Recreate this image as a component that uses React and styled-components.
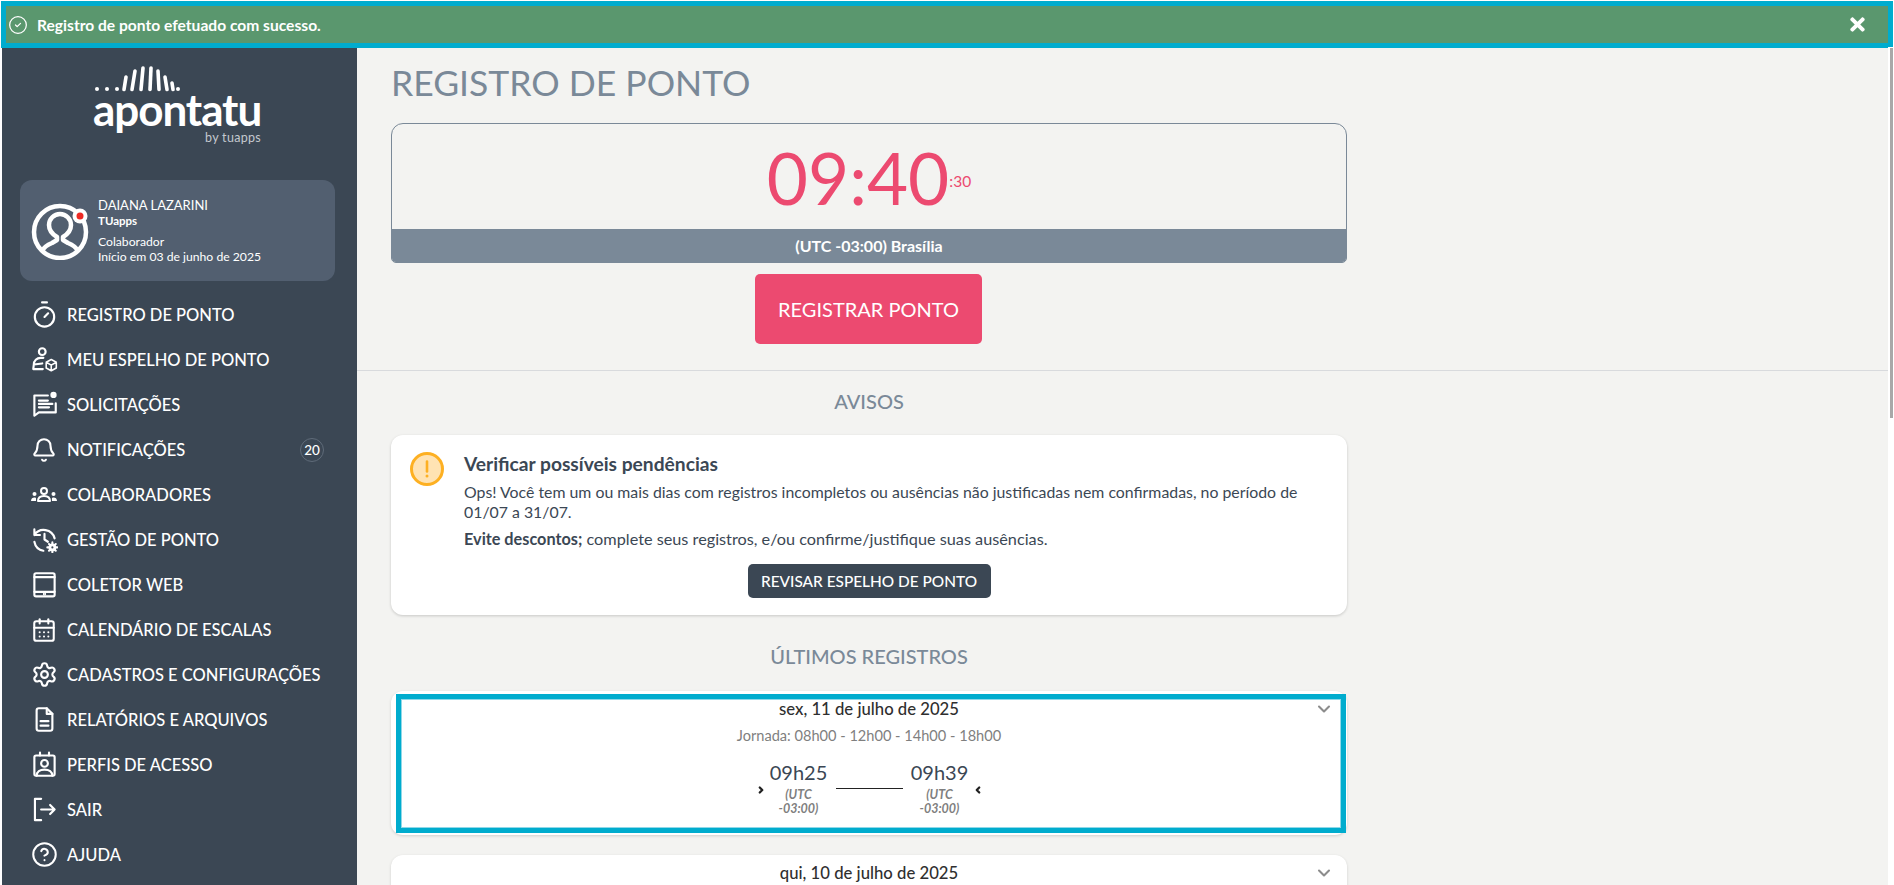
import React from "react";
import styled, { createGlobalStyle } from "styled-components";
import {
  Bell,
  CalendarDays,
  ChevronDown,
  ChevronLeft,
  ChevronRight,
  CircleCheck,
  CircleHelp,
  Settings,
  Timer,
} from "lucide-react";
import { FaTimes } from "react-icons/fa";

const GlobalStyle = createGlobalStyle`
  html, body {
    margin: 0;
    height: 100%;
    overflow: hidden;
    background: #ffffff;
    font-family: "Lato", "Noto Sans", sans-serif;
  }
  * { box-sizing: border-box; }
`;

const Page = styled.div`
  width: 1894px;
  height: 885px;
  display: flex;
  flex-direction: column;
  overflow: hidden;
`;

const Banner = styled.div`
  height: 47px;
  margin: 1px 1px 0;
  flex: none;
  display: flex;
  align-items: center;
  background: #5a976e;
  border: 5px solid #00acce;
  color: #ffffff;
  padding: 0 20px 0 2px;
`;

const BannerText = styled.span`
  margin-left: 9px;
  font-size: 15.6px;
  font-weight: 700;
  flex: 1;
`;

const Body = styled.div`
  flex: 1;
  min-height: 0;
  display: flex;
  padding-left: 2px;
`;

const Sidebar = styled.aside`
  width: 355px;
  flex: none;
  background: #3b4754;
  color: #ffffff;
  display: flex;
  flex-direction: column;
`;

const LogoBlock = styled.div`
  width: 168px;
  height: 132px;
  margin-left: 91px;
  padding-top: 18px;
  display: flex;
  flex-direction: column;
`;

const LogoWord = styled.div`
  font-size: 44px;
  font-weight: 700;
  line-height: 32px;
  letter-spacing: -1.07px;
  height: 38px;
  margin-top: 1px;
`;

const LogoBy = styled.div`
  font-size: 12.5px;
  line-height: 14px;
  letter-spacing: 0.3px;
  color: #c4c9cf;
  text-align: right;
`;

const UserCard = styled.div`
  width: 315px;
  height: 101px;
  margin-left: 18px;
  background: #525f70;
  border-radius: 12px;
  display: flex;
  align-items: center;
  padding-left: 11px;
  gap: 9px;
  flex: none;
`;

const UserInfo = styled.div`
  display: flex;
  flex-direction: column;
`;

const UserName = styled.span`
  font-size: 13px;
  line-height: 16px;
`;

const UserLine = styled.span`
  font-size: ${(p) => (p.$strong ? 11.5 : 12.2)}px;
  line-height: 15px;
  font-weight: ${(p) => (p.$strong ? 700 : 400)};
  margin-top: ${(p) => p.$gap || 0}px;
`;

const Nav = styled.nav`
  margin-top: 11px;
  display: flex;
  flex-direction: column;
`;

const NavItem = styled.a`
  height: 45px;
  flex: none;
  display: flex;
  align-items: center;
  padding: 0 28px 0 30px;
  font-size: 16.5px;
  font-weight: 500;
  white-space: nowrap;
`;

const NavIcon = styled.span`
  width: 24px;
  height: 24px;
  margin-right: 11px;
  display: flex;
  align-items: center;
  justify-content: center;

  svg {
    flex: none;
  }
`;

const NavBadge = styled.span`
  margin-left: auto;
  margin-right: 5px;
  width: 24px;
  height: 24px;
  border: 1px solid #5f6b79;
  border-radius: 50%;
  font-size: 13.5px;
  display: flex;
  align-items: center;
  justify-content: center;
`;

const Main = styled.main`
  flex: 1;
  min-width: 0;
  background: #f3f3f1;
  overflow: hidden;
`;

const TopSection = styled.section`
  padding: 14px 0 26px 34px;
  border-bottom: 1px solid #d8dadd;
`;

const Column = styled.div`
  width: 956px;
  display: flex;
  flex-direction: column;
  align-items: center;
`;

const Title = styled.h1`
  align-self: flex-start;
  margin: 0 0 19px;
  font-size: 35.5px;
  line-height: 42px;
  font-weight: 400;
  color: #7a8998;
`;

const ClockBox = styled.div`
  width: 100%;
  height: 140px;
  border: 1px solid #7a8998;
  border-radius: 12px 12px 5px 5px;
  display: flex;
  flex-direction: column;
  overflow: hidden;
`;

const ClockFace = styled.div`
  flex: 1;
  display: flex;
  align-items: center;
  justify-content: center;
  padding-top: 3px;
  color: #ec4a70;
`;

const ClockTime = styled.span`
  font-size: 71px;
  line-height: 80px;
  font-weight: 400;
`;

const ClockSeconds = styled.span`
  font-size: 15.5px;
  align-self: flex-start;
  margin-top: 45px;
`;

const ClockZone = styled.div`
  height: 33px;
  background: #7a8998;
  color: #ffffff;
  font-size: 16px;
  font-weight: 700;
  display: flex;
  align-items: center;
  justify-content: center;
`;

const RegisterButton = styled.button`
  margin: 11px 1px 0 0;
  width: 227px;
  height: 70px;
  border: 0;
  border-radius: 5px;
  background: #ec4a70;
  color: #ffffff;
  font-family: inherit;
  font-size: 20px;
`;

const BottomSection = styled.section`
  padding: 18px 0 0 34px;
`;

const Heading = styled.h2`
  margin: ${(p) => p.$top || 0}px 0 ${(p) => p.$bottom || 0}px;
  font-size: 20px;
  line-height: 24px;
  font-weight: 500;
  color: #7a8998;
`;

const NoticeCard = styled.div`
  width: 100%;
  height: 180px;
  background: #ffffff;
  border-radius: 12px;
  box-shadow: 0 1px 3px rgba(0, 0, 0, 0.18);
  display: flex;
  padding: 17px 20px 0 19px;
  gap: 20px;
  color: #3b4754;
`;

const NoticeBody = styled.div`
  flex: 1;
  display: flex;
  flex-direction: column;
`;

const NoticeTitle = styled.div`
  font-size: 19.2px;
  line-height: 24px;
  font-weight: 700;
`;

const NoticeText = styled.p`
  margin: ${(p) => p.$top || 0}px 0 0;
  font-size: ${(p) => p.$size}px;
  line-height: 20px;
`;

const ReviewButton = styled.button`
  align-self: center;
  margin: 15px 0 0 -53px;
  width: 243px;
  height: 34px;
  border: 0;
  border-radius: 5px;
  background: #3b4754;
  color: #ffffff;
  font-family: inherit;
  font-size: 15.4px;
  font-weight: 500;
`;

const RecordCard = styled.div`
  position: relative;
  width: 100%;
  height: ${(p) => p.$height}px;
  margin-bottom: 20px;
  padding-top: 7px;
  background: #ffffff;
  border-radius: 12px;
  box-shadow: 0 1px 3px rgba(0, 0, 0, 0.15);
  display: flex;
  flex-direction: column;
  align-items: center;
  flex: none;
`;

const FocusRing = styled.div`
  position: absolute;
  inset: 3px 1px 2px 5px;
  border: 5px solid #00acce;
  box-shadow: inset 0 0 0 1px #8fd8e8;
  pointer-events: none;
`;

const RecordChevron = styled.span`
  position: absolute;
  top: 8px;
  right: 13px;
  color: #8c8c8c;
  display: flex;
`;

const RecordDate = styled.div`
  font-size: 16.7px;
  line-height: 22px;
  font-weight: 500;
  color: #2f2f2f;
`;

const RecordShift = styled.div`
  margin-top: 6px;
  font-size: 14.6px;
  line-height: 20px;
  color: #7f7f7f;
`;

const Punches = styled.div`
  margin-top: 15px;
  display: flex;
  align-items: flex-start;
`;

const PunchArrow = styled.span`
  margin-top: 22px;
  width: 10px;
  display: flex;
  justify-content: center;
  color: #222222;
`;

const Punch = styled.div`
  width: 66px;
  display: flex;
  flex-direction: column;
  align-items: center;
`;

const PunchTime = styled.span`
  font-size: 20px;
  line-height: 22px;
  color: #3b4754;
`;

const PunchZone = styled.span`
  font-size: 12.5px;
  line-height: 14px;
  font-style: italic;
  font-weight: 700;
  color: #7f7f7f;
  text-align: center;
  margin-top: 5px;
  width: 44px;
`;

const PunchLine = styled.span`
  width: 67px;
  height: 1px;
  margin: 27px 4px 0;
  background: #222222;
`;

const Scrollbar = styled.div`
  width: 6px;
  flex: none;
  background: #ffffff;
  margin-top: -1px;
`;

const ScrollThumb = styled.div`
  width: 3px;
  height: 370px;
  margin: 1px 0 0 2px;
  background: #a8a8a8;
`;

const Line = ({ children, size = 27 }) => (
  <svg width={size} height={size} viewBox="0 0 24 24" fill="none" stroke="currentColor" strokeWidth="1.9" strokeLinecap="round" strokeLinejoin="round">
    {children}
  </svg>
);

const LogoBars = () => (
  <svg width="168" height="26" viewBox="0 0 168 26" fill="none" stroke="#ffffff" strokeLinecap="round">
    <g fill="#ffffff" stroke="none">
      <circle cx="4" cy="23" r="2" />
      <circle cx="14" cy="23" r="2" />
      <circle cx="24" cy="23" r="2" />
      <circle cx="85" cy="23" r="2" />
    </g>
    <g strokeWidth="3.6">
      <path d="M31 23.5 33 11" />
      <path d="M39 23.5 42 5" />
      <path d="M48 23.5 50 2" />
      <path d="M57 23.5 58 2" />
      <path d="M66 23.5 65 5" />
      <path d="M74 23.5 72 11" />
      <path d="M80 23.5 79 17" />
    </g>
  </svg>
);

const Avatar = () => (
  <svg width="58" height="58" viewBox="0 0 58 58" fill="none" stroke="#ffffff" strokeWidth="4.5">
    <circle cx="29" cy="30" r="26" />
    <path d="M11 49c2-4 5-6 10-8l5-3v-3c-5-3-8-7-8-12 0-6 5-11 11-11s11 5 11 11c0 5-3 9-8 12v3l5 3c5 2 8 4 10 8" strokeLinejoin="round" />
    <circle cx="49" cy="14" r="7.5" fill="#ffffff" stroke="none" />
    <circle cx="49" cy="14" r="3.5" fill="#ee2a24" stroke="none" />
  </svg>
);

const MirrorIcon = () => (
  <Line>
    <circle cx="10" cy="5" r="3" />
    <path d="M11 10.500H8.500A6 6 0 0 0 2.500 16.500M2 20.500h8.500M2.500 16.500 2 20.500M2.500 16.500l7.500-1" />
    <path d="m18 12 4.500 2.500v5L18 22l-4.500-2.500v-5zM13.500 14.500 18 17l4.500-2.500M18 17v5" strokeWidth="1.400" />
  </Line>
);

const RequestsIcon = () => (
  <Line>
    <path d="M15 4H3v18l4-3h15v-8" />
    <path d="M7 8.500h8M7 11.500h12M7 14.500h9" />
    <circle cx="20" cy="3.500" r="2.800" fill="currentColor" stroke="none" />
  </Line>
);

const TeamIcon = () => (
  <svg width="28" height="24" viewBox="0 0 28 24" fill="#ffffff">
    <circle cx="14" cy="8" r="3" fill="none" stroke="#ffffff" strokeWidth="2" />
    <path d="M8 18c0-3.500 2.500-5 6-5s6 1.500 6 5z" fill="none" stroke="#ffffff" strokeWidth="2" strokeLinejoin="round" />
    <circle cx="4.500" cy="11" r="2" />
    <circle cx="23.500" cy="11" r="2" />
    <path d="M1 18c0-2.500 1.500-3.500 3.500-3.500S6 15.500 6 18zM27 18c0-2.500-1.500-3.500-3.500-3.500S22 15.500 22 18z" />
  </svg>
);

const HistoryGearIcon = () => (
  <Line>
    <path d="M3 8a10 10 0 0 1 18 3M3 3v5h5M12 7v5l3 2M3 14a10 10 0 0 0 8 8" />
    <circle cx="19" cy="19" r="2.200" strokeWidth="2.500" />
    <path d="M19 14.500v1.500M19 22v1.500M14.500 19H16M22 19h1.500M16 16l1 1M21 21l1 1M22 16l-1 1M17 21l-1 1" strokeWidth="1.800" />
  </Line>
);

const TabletIcon = () => (
  <Line>
    <rect x="3" y="2" width="18" height="20.500" rx="1.500" />
    <path d="M3 5.500h18M3 18.500h18" />
    <circle cx="12" cy="20.400" r="0.500" fill="currentColor" />
  </Line>
);

const ReportIcon = () => (
  <Line>
    <path d="M14 2H7a2 2 0 0 0-2 2v16a2 2 0 0 0 2 2h10a2 2 0 0 0 2-2V7z" />
    <path d="M14 2v5h5M8.500 13.500h7M8.500 17.500h7" />
  </Line>
);

const ProfileIcon = () => (
  <Line>
    <rect x="3" y="4" width="18" height="18" rx="1.500" />
    <path d="M8 1.500V4M16 1.500V4" />
    <circle cx="12" cy="11" r="3" />
    <path d="M5 22c0-3.500 3-5.500 7-5.500s7 2 7 5.500" />
  </Line>
);

const ExitIcon = () => (
  <Line>
    <path d="M9 2.500H3.500v19H9M9 12h12M17 8l4 4-4 4" />
  </Line>
);

const WarningIcon = () => (
  <svg width="34" height="34" viewBox="0 0 34 34" fill="#ffe3b3" stroke="#fdb022">
    <circle cx="17" cy="17" r="15.500" strokeWidth="3" />
    <path d="M17 9.500v10" strokeWidth="2.600" strokeLinecap="round" />
    <circle cx="17" cy="24" r="1.500" fill="#fdb022" stroke="none" />
  </svg>
);

const MENU = [
  { label: "REGISTRO DE PONTO", icon: <Timer size={29} strokeWidth={1.8} /> },
  { label: "MEU ESPELHO DE PONTO", icon: <MirrorIcon /> },
  { label: "SOLICITAÇÕES", icon: <RequestsIcon /> },
  { label: "NOTIFICAÇÕES", icon: <Bell size={26} strokeWidth={1.9} />, badge: 20 },
  { label: "COLABORADORES", icon: <TeamIcon /> },
  { label: "GESTÃO DE PONTO", icon: <HistoryGearIcon /> },
  { label: "COLETOR WEB", icon: <TabletIcon /> },
  { label: "CALENDÁRIO DE ESCALAS", icon: <CalendarDays size={26} strokeWidth={1.9} /> },
  { label: "CADASTROS E CONFIGURAÇÕES", icon: <Settings size={27} strokeWidth={1.9} /> },
  { label: "RELATÓRIOS E ARQUIVOS", icon: <ReportIcon /> },
  { label: "PERFIS DE ACESSO", icon: <ProfileIcon /> },
  { label: "SAIR", icon: <ExitIcon /> },
  { label: "AJUDA", icon: <CircleHelp size={27} strokeWidth={1.8} /> },
];

function App() {
  return (
    <Page>
      <GlobalStyle />
      <Banner>
        <CircleCheck size={20} strokeWidth={1.5} />
        <BannerText>Registro de ponto efetuado com sucesso.</BannerText>
        <FaTimes size={21} />
      </Banner>
      <Body>
        <Sidebar>
          <LogoBlock>
            <LogoBars />
            <LogoWord>apontatu</LogoWord>
            <LogoBy>by tuapps</LogoBy>
          </LogoBlock>
          <UserCard>
            <Avatar />
            <UserInfo>
              <UserName>DAIANA LAZARINI</UserName>
              <UserLine $strong>TUapps</UserLine>
              <UserLine $gap={6}>Colaborador</UserLine>
              <UserLine>Início em 03 de junho de 2025</UserLine>
            </UserInfo>
          </UserCard>
          <Nav>
            {MENU.map((item) => (
              <NavItem key={item.label}>
                <NavIcon>{item.icon}</NavIcon>
                {item.label}
                {item.badge && <NavBadge>{item.badge}</NavBadge>}
              </NavItem>
            ))}
          </Nav>
        </Sidebar>
        <Main>
          <TopSection>
            <Column>
              <Title>REGISTRO DE PONTO</Title>
              <ClockBox>
                <ClockFace>
                  <ClockTime>09:40</ClockTime>
                  <ClockSeconds>:30</ClockSeconds>
                </ClockFace>
                <ClockZone>(UTC -03:00) Brasília</ClockZone>
              </ClockBox>
              <RegisterButton>REGISTRAR PONTO</RegisterButton>
            </Column>
          </TopSection>
          <BottomSection>
            <Column>
              <Heading $bottom={22}>AVISOS</Heading>
              <NoticeCard>
                <WarningIcon />
                <NoticeBody>
                  <NoticeTitle>Verificar possíveis pendências</NoticeTitle>
                  <NoticeText $top={6} $size={15.85}>
                    Ops! Você tem um ou mais dias com registros incompletos ou ausências não justificadas nem confirmadas, no período de 01/07 a 31/07.
                  </NoticeText>
                  <NoticeText $top={7} $size={16.25}>
                    <strong>Evite descontos;</strong> complete seus registros, e/ou confirme/justifique suas ausências.
                  </NoticeText>
                  <ReviewButton>REVISAR ESPELHO DE PONTO</ReviewButton>
                </NoticeBody>
              </NoticeCard>
              <Heading $top={29} $bottom={23}>ÚLTIMOS REGISTROS</Heading>
              <RecordCard $height={144}>
                <FocusRing />
                <RecordChevron><ChevronDown size={20} strokeWidth={2.5} /></RecordChevron>
                <RecordDate>sex, 11 de julho de 2025</RecordDate>
                <RecordShift>Jornada: 08h00 - 12h00 - 14h00 - 18h00</RecordShift>
                <Punches>
                  <PunchArrow><ChevronRight size={14} strokeWidth={5.5} /></PunchArrow>
                  <Punch>
                    <PunchTime>09h25</PunchTime>
                    <PunchZone>(UTC -03:00)</PunchZone>
                  </Punch>
                  <PunchLine />
                  <Punch>
                    <PunchTime>09h39</PunchTime>
                    <PunchZone>(UTC -03:00)</PunchZone>
                  </Punch>
                  <PunchArrow><ChevronLeft size={14} strokeWidth={5.5} /></PunchArrow>
                </Punches>
              </RecordCard>
              <RecordCard $height={144}>
                <RecordChevron><ChevronDown size={20} strokeWidth={2.5} /></RecordChevron>
                <RecordDate>qui, 10 de julho de 2025</RecordDate>
              </RecordCard>
            </Column>
          </BottomSection>
        </Main>
        <Scrollbar>
          <ScrollThumb />
        </Scrollbar>
      </Body>
    </Page>
  );
}

export default App;
